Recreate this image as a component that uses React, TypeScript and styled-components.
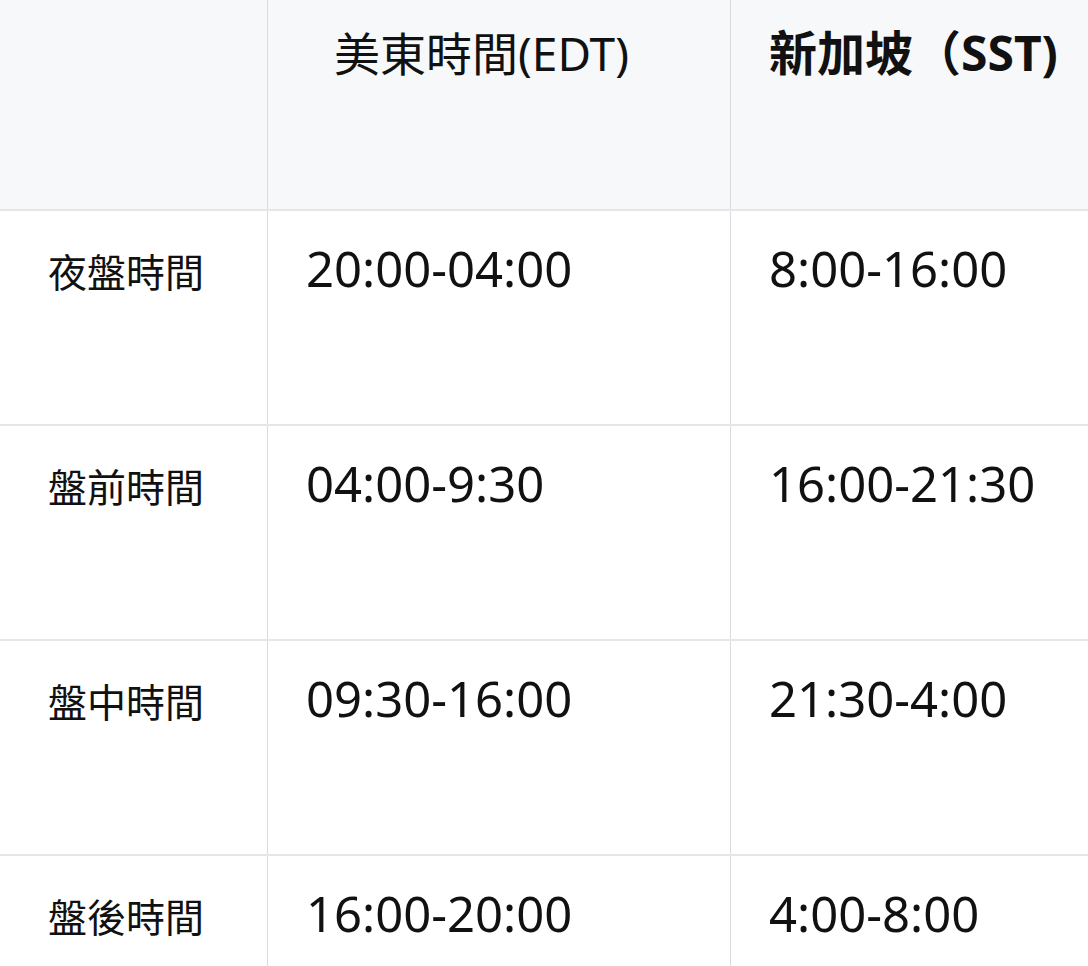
import styled, { createGlobalStyle } from 'styled-components';

const GlobalStyle = createGlobalStyle`
	body {
		margin: 0;
		background: #ffffff;
		font-family: 'Noto Sans', 'Noto Sans CJK TC', sans-serif;
		color: #111111;
	}
`;

const Table = styled.div`
	width: 100%;
	height: 966px;
	overflow: hidden;
`;

const Row = styled.div<{ $head?: boolean }>`
	display: grid;
	grid-template-columns: 267px 463px 1fr;
	height: ${(p) => (p.$head ? '211px' : '215px')};
	box-sizing: border-box;
	background: ${(p) => (p.$head ? '#f7f8fa' : '#ffffff')};
	border-bottom: 2px solid ${(p) => (p.$head ? '#e4e6ea' : '#e6e6e9')};
`;

const Cell = styled.div<{ $first?: boolean; $indent?: number }>`
	box-sizing: border-box;
	border-left: ${(p) => (p.$first ? 'none' : '1px solid #dadadf')};
	padding-left: ${(p) => p.$indent ?? 38}px;
	padding-top: 30px;
	white-space: nowrap;
	overflow: hidden;
`;

const HeadText = styled.span<{ $bold?: boolean }>`
	display: block;
	font-family: 'Noto Sans', 'Noto Sans CJK TC', sans-serif;
	font-size: ${(p) => (p.$bold ? '48px' : '46px')};
	font-weight: ${(p) => (p.$bold ? 700 : 400)};
	line-height: 50px;
	margin-top: -2px;
`;

const Label = styled.span`
	display: block;
	font-family: 'Noto Sans CJK TC', sans-serif;
	font-size: 39px;
	font-weight: 400;
	line-height: 50px;
	padding-top: 4px;
`;

const Time = styled.span`
	display: block;
	font-family: 'Noto Sans', 'Open Sans', sans-serif;
	font-size: 49px;
	line-height: 50px;
	padding-top: 2px;
`;

const rows = [
	{ label: '夜盤時間', edt: '20:00-04:00', sst: '8:00-16:00' },
	{ label: '盤前時間', edt: '04:00-9:30', sst: '16:00-21:30' },
	{ label: '盤中時間', edt: '09:30-16:00', sst: '21:30-4:00' },
	{ label: '盤後時間', edt: '16:00-20:00', sst: '4:00-8:00' },
];

export default function App() {
	return (
		<>
			<GlobalStyle />
			<Table>
				<Row $head>
					<Cell $first />
					<Cell $indent={66}>
						<HeadText>美東時間(EDT)</HeadText>
					</Cell>
					<Cell>
						<HeadText $bold>新加坡（SST)</HeadText>
					</Cell>
				</Row>
				{rows.map((r) => (
					<Row key={r.label}>
						<Cell $first $indent={48}>
							<Label>{r.label}</Label>
						</Cell>
						<Cell>
							<Time>{r.edt}</Time>
						</Cell>
						<Cell>
							<Time>{r.sst}</Time>
						</Cell>
					</Row>
				))}
			</Table>
		</>
	);
}
